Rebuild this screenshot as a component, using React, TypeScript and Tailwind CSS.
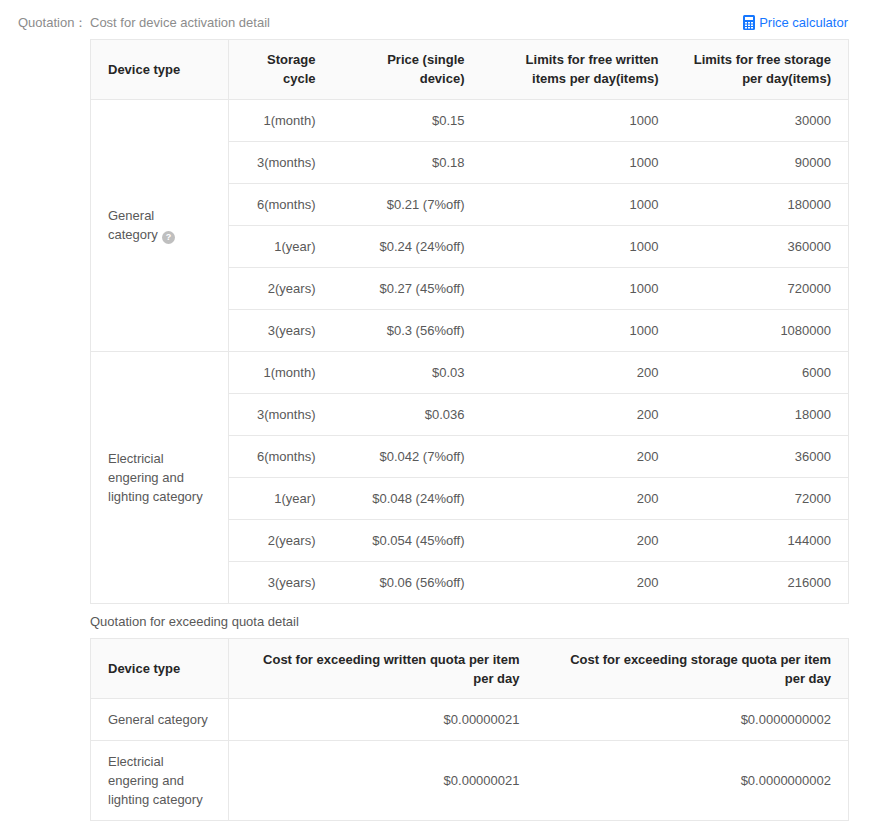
import React from 'react';

const general = [
  ['1(month)', '$0.15', '1000', '30000'],
  ['3(months)', '$0.18', '1000', '90000'],
  ['6(months)', '$0.21 (7%off)', '1000', '180000'],
  ['1(year)', '$0.24 (24%off)', '1000', '360000'],
  ['2(years)', '$0.27 (45%off)', '1000', '720000'],
  ['3(years)', '$0.3 (56%off)', '1000', '1080000'],
];
const electric = [
  ['1(month)', '$0.03', '200', '6000'],
  ['3(months)', '$0.036', '200', '18000'],
  ['6(months)', '$0.042 (7%off)', '200', '36000'],
  ['1(year)', '$0.048 (24%off)', '200', '72000'],
  ['2(years)', '$0.054 (45%off)', '200', '144000'],
  ['3(years)', '$0.06 (56%off)', '200', '216000'],
];

// only the first column has a vertical divider; the rest share horizontal lines
const th = 'border-y border-[#e8e8e8] px-[17px] text-[13px] font-semibold text-[#262626] leading-[19px] align-middle';
const td = 'border-y border-[#e8e8e8] px-[17px] text-[13px] text-[#595959] leading-[19px] h-[42px] text-right align-middle';
const first = 'border border-[#e8e8e8] px-[17px] text-[13px] text-[#595959] leading-[19px] h-[42px] text-left align-middle';

function Group({ label, rows, icon }: { label: React.ReactNode; rows: string[][]; icon?: boolean }) {
  return (
    <>
      {rows.map((r, i) => (
        <tr key={i}>
          {i === 0 && (
            <td rowSpan={rows.length} className={first}>
              {label}
              {icon && (
                <span className="ml-1 inline-flex h-[13px] w-[13px] items-center justify-center rounded-full bg-[#bfbfbf] align-[-1px] text-[9px] font-bold leading-none text-white">?</span>
              )}
            </td>
          )}
          {r.map((c, j) => (
            <td key={j} className={`${td} ${j === 3 ? 'border-r' : ''}`}>{c}</td>
          ))}
        </tr>
      ))}
    </>
  );
}

export default function App() {
  return (
    <div className="bg-white px-[18px] pt-[13px] pb-4" style={{ fontFamily: '"Liberation Sans", Arial, sans-serif' }}>
      <div className="flex items-center justify-between pr-[12px] text-[13px] text-[#8c8c8c]">
        <div>
          <span className="inline-block w-[72px]">Quotation：</span>Cost for device activation detail
        </div>
        <div className="flex items-center gap-1 text-[#1677ff]">
          <svg width="12" height="15" viewBox="0 0 12 15">
            <rect width="12" height="15" rx="1.5" fill="#1677ff" />
            <rect x="2" y="2" width="8" height="3" fill="white" />
            {[0, 1, 2].map((r) => [0, 1, 2].map((c) => (
              <rect key={`${r}${c}`} x={2 + c * 3} y={7 + r * 2.5} width="2" height="1.5" fill="white" />
            )))}
          </svg>
          Price calculator
        </div>
      </div>
      <div className="ml-[72px] mt-[6px] w-[758px]">
        <table className="w-full border-collapse table-fixed">
          <colgroup>
            <col style={{ width: 138 }} /><col style={{ width: 104 }} /><col style={{ width: 149 }} /><col style={{ width: 194 }} /><col style={{ width: 173 }} />
          </colgroup>
          <thead>
            <tr className="h-[60px] bg-[#fafafa]">
              <th className={`${th} border text-left`}>Device type</th>
              <th className={`${th} text-right`}>Storage cycle</th>
              <th className={`${th} text-right`}>Price (single device)</th>
              <th className={`${th} text-right`}>Limits for free written items per day(items)</th>
              <th className={`${th} border-r text-right`}>Limits for free storage per day(items)</th>
            </tr>
          </thead>
          <tbody>
            <Group label={<>General<br />category</>} rows={general} icon />
            <Group label="Electricial engering and lighting category" rows={electric} />
          </tbody>
        </table>
        <div className="mt-[8px] mb-[7px] text-[13px] text-[#595959]">Quotation for exceeding quota detail</div>
        <table className="w-full border-collapse table-fixed">
          <colgroup>
            <col style={{ width: 138 }} /><col style={{ width: 308 }} /><col style={{ width: 312 }} />
          </colgroup>
          <thead>
            <tr className="h-[60px] bg-[#fafafa]">
              <th className={`${th} border text-left`}>Device type</th>
              <th className={`${th} text-right`}>Cost for exceeding written quota per item per day</th>
              <th className={`${th} border-r text-right`}>Cost for exceeding storage quota per item per day</th>
            </tr>
          </thead>
          <tbody>
            <tr>
              <td className={first}>General category</td>
              <td className={td}>$0.00000021</td>
              <td className={`${td} border-r`}>$0.0000000002</td>
            </tr>
            <tr className="h-[80px]">
              <td className={first}>Electricial engering and lighting category</td>
              <td className={td}>$0.00000021</td>
              <td className={`${td} border-r`}>$0.0000000002</td>
            </tr>
          </tbody>
        </table>
      </div>
    </div>
  );
}
